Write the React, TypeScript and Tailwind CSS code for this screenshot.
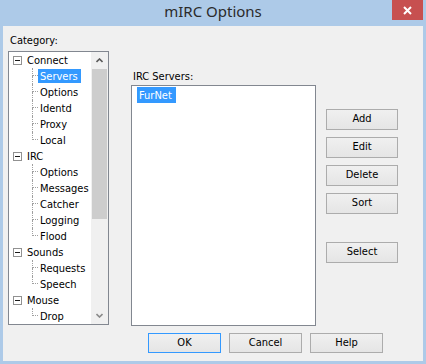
import React from 'react';

type TreeGroup = { label: string; children: string[] };

const tree: TreeGroup[] = [
  { label: 'Connect', children: ['Servers', 'Options', 'Identd', 'Proxy', 'Local'] },
  { label: 'IRC', children: ['Options', 'Messages', 'Catcher', 'Logging', 'Flood'] },
  { label: 'Sounds', children: ['Requests', 'Speech'] },
  { label: 'Mouse', children: ['Drop'] },
];

function Expander() {
  return (
    <div className="w-[9px] h-[9px] border border-[#919191] bg-white flex items-center justify-center shrink-0">
      <div className="w-[5px] h-px bg-[#1a1a1a]" />
    </div>
  );
}

function ChildRow({ label, last, selected }: { label: string; last: boolean; selected?: boolean }) {
  return (
    <div className="h-[16px] flex items-center pl-[23px]">
      <div className="w-[6px] h-[16px] flex flex-col shrink-0">
        <div className="h-[8px] border-l border-b border-dotted border-[#a0a0a0]" />
        {!last && <div className="flex-1 border-l border-dotted border-[#a0a0a0]" />}
      </div>
      <span
        className={
          'h-[14px] leading-[16px] pl-[2px] pr-[3px] whitespace-nowrap ' +
          (selected ? 'bg-[#3399ff] text-white' : 'text-black')
        }
      >
        {label}
      </span>
    </div>
  );
}

function Chevron({ down }: { down?: boolean }) {
  return (
    <svg width="7" height="5" viewBox="0 0 7 5">
      <path
        d={down ? 'M0.5 1 L3.5 4 L6.5 1' : 'M0.5 4 L3.5 1 L6.5 4'}
        fill="none"
        stroke={down ? '#8a8a8a' : '#5a5a5a'}
        strokeWidth="1.6"
      />
    </svg>
  );
}

function Button({ label, wide, primary }: { label: string; wide?: boolean; primary?: boolean }) {
  return (
    <div
      className={
        (wide ? 'w-[73px] h-[20px] ' : 'w-[72px] h-[21px] ') +
        'border bg-gradient-to-b from-[#f0f0f0] to-[#e5e5e5] flex items-center justify-center text-black ' +
        (primary ? 'border-[#3399ff]' : 'border-[#acacac]')
      }
    >
      {label}
    </div>
  );
}

export default function App() {
  return (
    <div className="w-[426px] h-[364px] bg-[#adcae8] flex flex-col font-['DejaVu_Sans_Condensed','DejaVu_Sans',sans-serif] text-[11px] select-none">
      {/* title bar */}
      <div className="h-[26px] flex shrink-0">
        <div className="w-[34px]" />
        <div className="flex-1 text-center text-[15px] leading-[23px] text-[#2b2b2b] font-['Noto_Sans',sans-serif]">
          mIRC Options
        </div>
        <div className="w-[31px] h-[20px] bg-[#c75050] flex items-center justify-center">
          <svg width="9" height="9" viewBox="0 0 9 9">
            <path d="M1 1 L8 8 M8 1 L1 8" stroke="white" strokeWidth="2" />
          </svg>
        </div>
        <div className="w-[3px]" />
      </div>

      {/* client area */}
      <div className="flex-1 mx-[3px] mb-[3px] bg-[#f0f0f0] flex flex-col">
        <div className="h-[300px] flex items-start">
          {/* category tree */}
          <div className="ml-[5px] mt-[7px] flex flex-col">
            <div className="h-[16px] leading-[16px] pl-[2px] text-black">Category:</div>
            <div className="mt-[2px] w-[101px] h-[274px] border border-[#828790] bg-white flex">
              <div className="flex-1 flex flex-col overflow-hidden">
                {tree.map((g, gi) => (
                  <React.Fragment key={g.label}>
                    <div className="h-[16px] flex items-center pl-[4px]">
                      <Expander />
                      <span className="ml-[3px] px-[2px] h-[14px] leading-[16px] text-black">{g.label}</span>
                    </div>
                    {g.children.map((c, ci) => (
                      <ChildRow
                        key={c + ci}
                        label={c}
                        last={ci === g.children.length - 1}
                        selected={gi === 0 && ci === 0}
                      />
                    ))}
                  </React.Fragment>
                ))}
              </div>
              <div className="w-[17px] flex flex-col bg-[#f0f0f0]">
                <div className="h-[17px] flex items-center justify-center">
                  <Chevron />
                </div>
                <div className="flex-1 flex flex-col">
                  <div className="h-[150px] mx-px bg-[#cdcdcd]" />
                </div>
                <div className="h-[17px] flex items-center justify-center">
                  <Chevron down />
                </div>
              </div>
            </div>
          </div>

          {/* server list */}
          <div className="ml-[22px] mt-[43px] flex flex-col">
            <div className="h-[16px] leading-[16px] pl-[2px] text-black">IRC Servers:</div>
            <div className="w-[185px] h-[241px] border border-[#828790] bg-white pt-px pl-[5px]">
              <div className="w-fit h-[16px] leading-[17px] pl-[2px] pr-[4px] bg-[#3399ff] text-white">FurNet</div>
            </div>
          </div>

          {/* side buttons */}
          <div className="ml-[10px] mt-[83px] flex flex-col gap-[7px]">
            <Button label="Add" />
            <Button label="Edit" />
            <Button label="Delete" />
            <Button label="Sort" />
            <div className="mt-[21px]">
              <Button label="Select" />
            </div>
          </div>
        </div>

        {/* dialog buttons */}
        <div className="mt-[7px] flex justify-end gap-[8px] pr-[40px]">
          <Button label="OK" wide primary />
          <Button label="Cancel" wide />
          <Button label="Help" wide />
        </div>
      </div>
    </div>
  );
}
